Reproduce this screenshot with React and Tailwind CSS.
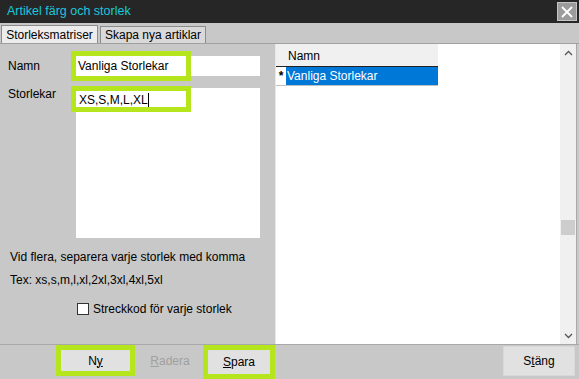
import React from "react";

const font = { fontFamily: '"Liberation Sans", Arial, sans-serif' };

export default function App() {
  return (
    <div
      className="relative w-[579px] h-[379px] bg-[#c8c8c8] flex flex-col overflow-hidden text-[12px] text-black"
      style={font}
    >
      {/* ===== title bar ===== */}
      <div className="h-[23px] bg-[#262626] flex items-center justify-between pl-[7px] pr-[2px] shrink-0">
        <span className="text-[#19c8dc] text-[12.5px] leading-none">Artikel färg och storlek</span>
        <div className="w-[20px] h-[19px] bg-[#9c9c9c] border border-[#c4c4c4] flex items-center justify-center">
          <svg width="12" height="12" viewBox="0 0 12 12">
            <path d="M1 1L11 11M11 1L1 11" stroke="#fff" strokeWidth="1.8" />
          </svg>
        </div>
      </div>

      {/* ===== tabs ===== */}
      <div className="h-[21px] flex items-end pl-[1px] shrink-0 border-b border-[#a0a0a0]">
        <div className="h-[18px] w-[97px] bg-[#ececec] border border-[#8c8c8c] border-b-0 flex items-center justify-center leading-none">
          Storleksmatriser
        </div>
        <div className="h-[17px] w-[106px] ml-[2px] bg-[#d9d9d9] border border-[#8c8c8c] border-b-0 flex items-center justify-center leading-none">
          Skapa nya artiklar
        </div>
      </div>

      {/* ===== main ===== */}
      <div className="flex flex-1 min-h-0">
        {/* left */}
        <div className="w-[276px] border-r border-[#e8e8e8] flex flex-col pl-[8px] pr-[15px]">
          <div className="flex items-start mt-[12px]">
            <span className="w-[68px] pt-[1px]">Namn</span>
            <div className="relative flex-1 h-[20px] bg-white flex items-center pl-[2px]">
              Vanliga Storlekar
              <div className="absolute left-[-5px] top-[-5px] w-[120px] h-[30px] border-[5px] border-[#b5e61d]" />
            </div>
          </div>
          <div className="flex items-start mt-[12px]">
            <span className="w-[68px] mt-[-3px]">Storlekar</span>
            <div className="relative flex-1 h-[150px] bg-white pl-[3px] pt-[3px]">
              <span>XS,S,M,L,XL</span>
              <span className="inline-block w-[1px] h-[14px] bg-black align-[-3px]" />
              <div className="absolute left-[-5px] top-[-2px] w-[120px] h-[26px] border-[5px] border-[#b5e61d]" />
            </div>
          </div>
          <div className="mt-[10px] pl-[2px]">Vid flera, separera varje storlek med komma</div>
          <div className="mt-[5px] pl-[2px]">Tex: xs,s,m,l,xl,2xl,3xl,4xl,5xl</div>
          <div className="flex items-center mt-[11px] ml-[69px]">
            <div className="w-[12px] h-[12px] bg-white border border-[#333]" />
            <span className="ml-[4px]">Streckkod för varje storlek</span>
          </div>
        </div>

        {/* right */}
        <div className="flex-1 flex bg-white border-r border-[#a8a8a8] mr-[2px]">
          <div className="flex-1 flex flex-col">
            <div className="flex w-[162px] h-[23px] bg-[#f0f0f0] border-b border-[#222]">
              <div className="w-[10px]" />
              <span className="pl-[2px] pt-[6px] leading-none">Namn</span>
            </div>
            <div className="flex w-[162px] h-[19px] border-b border-[#c0c0c0]">
              <div className="w-[10px] flex items-center justify-center text-[12px] font-bold leading-none">*</div>
              <div className="flex-1 bg-[#0078d7] text-white flex items-center pl-[1px]">Vanliga Storlekar</div>
            </div>
          </div>
          <div className="w-[16px] bg-[#f0f0f0] flex flex-col items-center">
            <svg width="9" height="6" viewBox="0 0 9 6" className="mt-[6px]">
              <path d="M1 5L4.5 1.5L8 5" stroke="#555" strokeWidth="1.3" fill="none" />
            </svg>
            <div className="mt-[164px] w-[14px] h-[15px] bg-[#cdcdcd]" />
            <div className="flex-1" />
            <svg width="9" height="6" viewBox="0 0 9 6" className="mb-[5px]">
              <path d="M1 1L4.5 4.5L8 1" stroke="#555" strokeWidth="1.3" fill="none" />
            </svg>
          </div>
        </div>
      </div>

      {/* ===== bottom buttons ===== */}
      <div className="h-[35px] flex items-start border-t border-[#a8a8a8] shrink-0">
        <div className="ml-[56px] w-[79px] h-[31px] border-[5px] border-[#b5e61d] bg-[#e1e1e1] flex items-center justify-center">
          N<span className="underline">y</span>
        </div>
        <div className="ml-[2px] w-[66px] h-[31px] flex items-center justify-center text-[#a0a0a0]">
          <span className="underline">R</span>adera
        </div>
        <div className="w-[72px] h-[34px] border-[5px] border-[#b5e61d] bg-[#e1e1e1] flex items-center justify-center">
          <span className="underline">S</span>para
        </div>
        <div className="flex-1" />
        <div className="mt-[1px] mr-[4px] w-[72px] h-[30px] bg-[#e1e1e1] border border-[#d8d8d8] flex items-center justify-center">
          S<span className="underline">t</span>äng
        </div>
      </div>
    </div>
  );
}
